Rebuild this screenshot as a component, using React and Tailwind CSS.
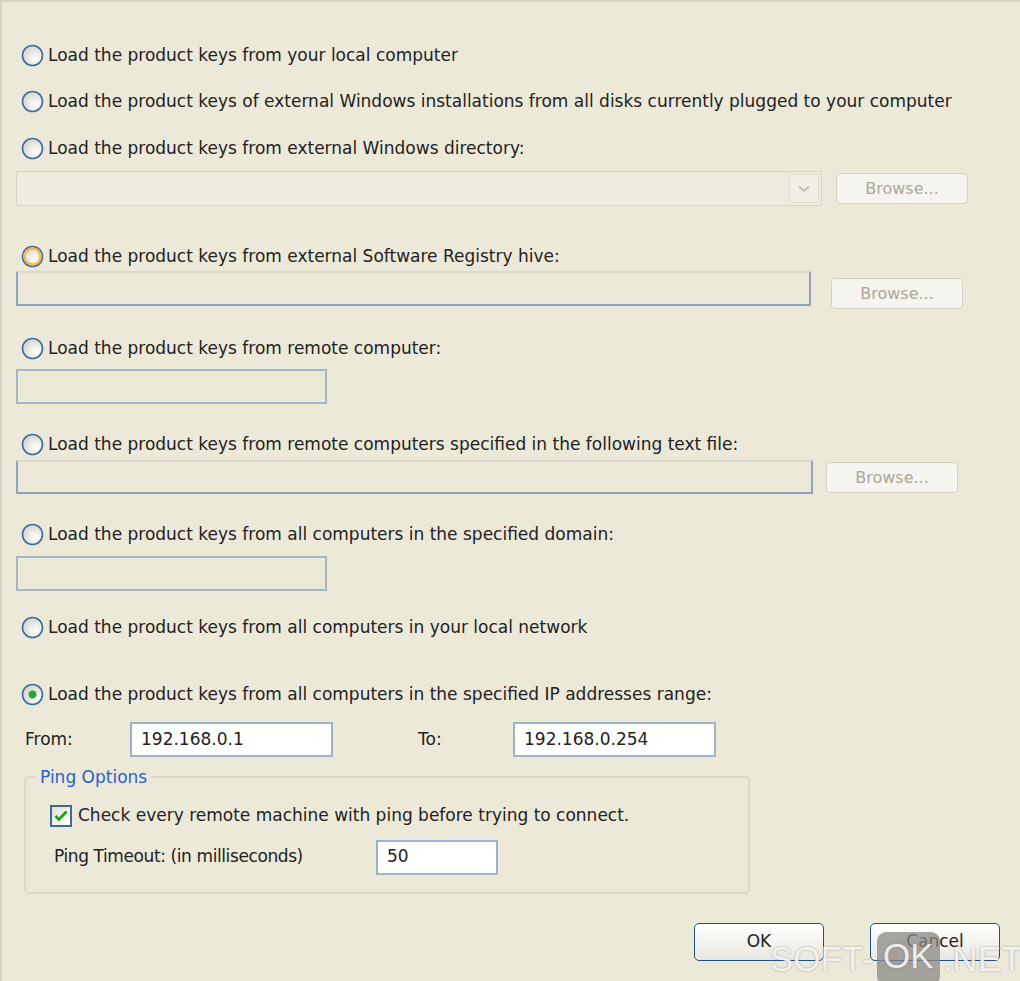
import React from 'react';

const font = { fontFamily: '"DejaVu Sans", Verdana, sans-serif' };

function Radio({ checked, hover }) {
  return (
    <svg width="23" height="23" viewBox="0 0 23 23" className="shrink-0">
      <defs>
        <radialGradient id={hover ? 'rgh' : 'rg'} cx="0.65" cy="0.65" r="0.7">
          <stop offset="0" stopColor="#ffffff" />
          <stop offset="1" stopColor="#d6d3c8" />
        </radialGradient>
      </defs>
      <circle cx="11.5" cy="11.5" r="10" fill={hover ? 'url(#rgh)' : 'url(#rg)'} stroke="#3a6ea5" strokeWidth="1.6" />
      {hover && <circle cx="11.5" cy="11.5" r="8" fill="none" stroke="#f5b84a" strokeWidth="2.6" />}
      {checked && <circle cx="11.5" cy="11.5" r="4.2" fill="#2fa33a" stroke="#9fd89f" strokeWidth="1" />}
    </svg>
  );
}

function RadioRow({ label, checked, hover, className }) {
  return (
    <div className={`flex h-6 items-center gap-[4px] pl-[19px] ${className}`}>
      <Radio checked={checked} hover={hover} />
      <span className="text-[17px] leading-6 text-[#222]">{label}</span>
    </div>
  );
}

function BrowseButton({ className }) {
  return (
    <div className={`flex h-[31px] w-[132px] items-center justify-center rounded-[4px] border border-[#d4d1c2] bg-[#f5f4ee] text-[16px] text-[#aca899] ${className}`}>
      Browse...
    </div>
  );
}

function Button({ label }) {
  return (
    <div className="flex h-[38px] w-[130px] items-center justify-center rounded-[5px] border-[1.5px] border-[#1f4f84] bg-gradient-to-b from-white to-[#e9e7df] text-[17px] text-[#222]">
      {label}
    </div>
  );
}

export default function App() {
  return (
    <div className="relative h-[981px] w-[1020px] overflow-hidden border-l-2 border-t-2 border-[#d8d5c6] bg-[#ece9d9]" style={font}>
      <div className="pt-[41px]">
        <RadioRow label="Load the product keys from your local computer" />
        <RadioRow className="mt-[22px]" label="Load the product keys of external Windows installations from all disks currently plugged to your computer" />
        <RadioRow className="mt-[23px]" label="Load the product keys from external Windows directory:" />

        <div className="mt-[11px] flex items-center pl-[14px]">
          <div className="flex h-[35px] w-[806px] items-stretch rounded-[2px] border border-[#d6d3c4] bg-[#eeebdd]">
            <div className="flex-1" />
            <div className="my-[2px] mr-[2px] flex w-[30px] items-center justify-center rounded-[2px] border border-[#e0ddd0] bg-[#f1efe5]">
              <svg width="12" height="8" viewBox="0 0 12 8">
                <path d="M1 1.5 L6 6 L11 1.5" fill="none" stroke="#c4c1b4" strokeWidth="2" />
              </svg>
            </div>
          </div>
          <BrowseButton className="ml-[14px]" />
        </div>

        <RadioRow className="mt-[38px]" hover label="Load the product keys from external Software Registry hive:" />
        <div className="mt-[3px] flex items-start pl-[14px]">
          <div className="h-[35px] w-[795px] border-2 border-[#8fa5b9] border-t-[#dcd9ca]" />
          <BrowseButton className="ml-[20px] mt-[7px]" />
        </div>

        <RadioRow className="mt-[27px]" label="Load the product keys from remote computer:" />
        <div className="mt-[9px] pl-[14px]">
          <div className="h-[35px] w-[311px] border-2 border-[#a5b6c6]" />
        </div>

        <RadioRow className="mt-[28px]" label="Load the product keys from remote computers specified in the following text file:" />
        <div className="mt-[4px] flex items-start pl-[14px]">
          <div className="h-[34px] w-[797px] border-2 border-[#8fa5b9] border-t-[#dcd9ca]" />
          <BrowseButton className="ml-[13px] mt-[2px]" />
        </div>

        <RadioRow className="mt-[28px]" label="Load the product keys from all computers in the specified domain:" />
        <div className="mt-[10px] pl-[14px]">
          <div className="h-[35px] w-[311px] border-2 border-[#a5b6c6]" />
        </div>

        <RadioRow className="mt-[24px]" label="Load the product keys from all computers in your local network" />
        <RadioRow className="mt-[43px]" checked label="Load the product keys from all computers in the specified IP addresses range:" />

        <div className="mt-[16px] flex items-center text-[17px] text-[#222]">
          <span className="w-[128px] pl-[23px]">From:</span>
          <div className="flex h-[35px] w-[203px] items-center border-2 border-[#9db3c8] bg-white pl-[9px]">192.168.0.1</div>
          <span className="ml-[85px] w-[95px]">To:</span>
          <div className="flex h-[35px] w-[203px] items-center border-2 border-[#9db3c8] bg-white pl-[9px]">192.168.0.254</div>
        </div>

        <div className="relative ml-[22px] mt-[19px] h-[118px] w-[726px] rounded-[5px] border-2 border-[#dcd9c9]">
          <span className="absolute -top-[13px] left-[10px] bg-[#ece9d9] px-[4px] text-[17px] leading-6 text-[#2760d0]">Ping Options</span>
          <div className="mt-[25px] flex items-center pl-[24px]">
            <div className="flex h-[22px] w-[22px] items-center justify-center border-2 border-[#3c6a9d] bg-gradient-to-br from-[#e2e0d6] to-white">
              <svg width="14" height="12" viewBox="0 0 14 12">
                <path d="M1.5 6 L5 9.5 L12.5 1.5" fill="none" stroke="#21a121" strokeWidth="2.8" />
              </svg>
            </div>
            <span className="ml-[6px] text-[17px] text-[#222]">Check every remote machine with ping before trying to connect.</span>
          </div>
          <div className="mt-[11px] flex items-center pl-[28px] text-[17px] text-[#222]">
            <span className="w-[322px] tracking-[-0.4px]">Ping Timeout: (in milliseconds)</span>
            <div className="flex h-[35px] w-[122px] items-center border-2 border-[#9db3c8] bg-white pl-[9px]">50</div>
          </div>
        </div>

        <div className="mt-[29px] flex justify-end gap-[46px] pr-[20px]">
          <Button label="OK" />
          <Button label="Cancel" />
        </div>
      </div>

      <div className="pointer-events-none absolute left-[768px] top-[930px] flex items-center text-[35px] leading-none text-white/85" style={{ fontFamily: '"Liberation Sans", Arial, sans-serif', textShadow: '0 0 2px rgba(110,110,110,0.7)' }}>
        <span>SOFT-</span>
        <span className="ml-[4px] rounded-[9px] bg-[#8a8884]/75 px-[6px] pb-[12px] pt-[6px]">OK</span>
        <span className="ml-[3px]">.NET</span>
      </div>
    </div>
  );
}
